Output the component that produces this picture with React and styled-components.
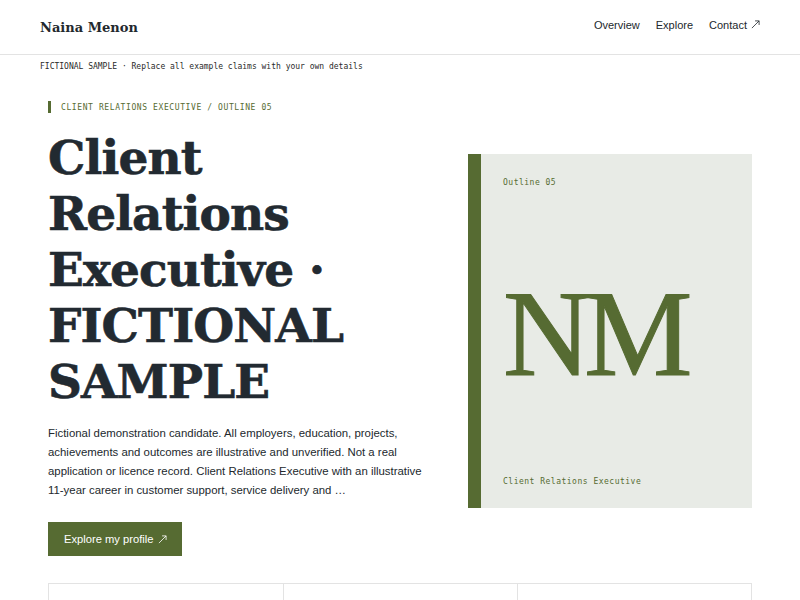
import React from 'react'
import styled, { createGlobalStyle } from 'styled-components'

const GlobalStyle = createGlobalStyle`
  * { box-sizing: border-box; }
  body {
    margin: 0;
    background: #ffffff;
    color: #222a31;
    font-family: "Liberation Sans", Arial, sans-serif;
  }
`

const green = '#566b32'
const mono = '"DejaVu Sans Mono", "Liberation Mono", monospace'
const serif = '"DejaVu Serif", Georgia, serif'

const Header = styled.header`
  height: 55px;
  padding: 0 40px;
  display: flex;
  align-items: center;
  justify-content: space-between;
  border-bottom: 1px solid #e3e3e3;
`

const Brand = styled.div`
  font-family: ${serif};
  font-weight: bold;
  font-size: 13px;
  color: #22282d;
`

const Nav = styled.nav`
  display: flex;
  gap: 16px;
  padding-bottom: 4px;

  a {
    color: #22282d;
    text-decoration: none;
    font-size: 11px;
  }
`

const Notice = styled.div`
  padding: 7px 40px 0;
  font-family: ${mono};
  font-size: 8px;
  color: #2a2a2a;
`

const Main = styled.main`
  width: 704px;
  margin: 0 auto;
`

const Hero = styled.section`
  display: grid;
  grid-template-columns: 1fr 284px;
  gap: 28px;
  align-items: center;
  padding-top: 30px;
`

const Left = styled.div``

const Eyebrow = styled.div`
  display: flex;
  align-items: center;
  gap: 10px;
  font-family: ${mono};
  font-size: 8px;
  letter-spacing: 0.6px;
  color: ${green};

  &::before {
    content: '';
    width: 3px;
    height: 12px;
    background: ${green};
  }
`

const Title = styled.h1`
  margin: 17px 0 0;
  font-family: ${serif};
  font-weight: 900;
  font-size: 47px;
  line-height: 56px;
  letter-spacing: -0.9px;
  color: #222a31;
  -webkit-text-stroke: 0.6px #222a31;
`

const Lead = styled.p`
  margin: 14px 0 0;
  font-size: 11.4px;
  line-height: 19px;
  color: #22282d;
`

const Button = styled.a`
  display: inline-flex;
  align-items: center;
  margin-top: 22px;
  height: 34px;
  padding: 0 15px 0 16px;
  background: ${green};
  color: #fff;
  font-size: 11.2px;
  text-decoration: none;
`

const Card = styled.div`
  height: 354px;
  margin-top: 4px;
  background: #e8ebe6;
  border-left: 13px solid ${green};
  padding: 24px 22px 22px 22px;
  display: flex;
  flex-direction: column;
  justify-content: space-between;
`

const CardLabel = styled.div`
  font-family: ${mono};
  font-size: 8px;
  letter-spacing: 0.5px;
  color: ${green};
`

const Monogram = styled.div`
  font-family: "Liberation Serif", "Times New Roman", serif;
  font-size: 122px;
  line-height: 1;
  color: ${green};
  letter-spacing: -7px;
  -webkit-text-stroke: 1px ${green};
  margin-top: 4px;
`

const Stats = styled.div`
  margin-top: 27px;
  display: grid;
  grid-template-columns: repeat(3, 1fr);
  border: 1px solid #e3e3e3;
  border-bottom: none;
  height: 40px;
`

const Stat = styled.div`
  & + & { border-left: 1px solid #e3e3e3; }
`

const ArrowIcon = styled.svg`
  width: 9px;
  height: 9px;
  margin-left: ${p => p.$gap}px;
`

const Arrow = ({ gap = 4 }) => (
  <ArrowIcon $gap={gap} viewBox="0 0 10 10">
    <path d="M1 9 L9 1 M4.5 1 H9 V5.5" fill="none" stroke="currentColor" strokeWidth="0.9" />
  </ArrowIcon>
)

export default function App() {
  return (
    <>
      <GlobalStyle />
      <Header>
        <Brand>Naina Menon</Brand>
        <Nav>
          <a href="#overview">Overview</a>
          <a href="#explore">Explore</a>
          <a href="#contact">Contact <Arrow gap={1} /></a>
        </Nav>
      </Header>
      <Notice>FICTIONAL SAMPLE · Replace all example claims with your own details</Notice>
      <Main>
        <Hero>
          <Left>
            <Eyebrow>CLIENT RELATIONS EXECUTIVE / OUTLINE 05</Eyebrow>
            <Title>Client Relations Executive · FICTIONAL SAMPLE</Title>
            <Lead>
              Fictional demonstration candidate. All employers, education, projects,
              achievements and outcomes are illustrative and unverified. Not a real
              application or licence record. Client Relations Executive with an
              illustrative 11-year career in customer support, service delivery and …
            </Lead>
            <Button href="#profile">Explore my profile<Arrow gap={4} /></Button>
          </Left>
          <Card>
            <CardLabel>Outline 05</CardLabel>
            <Monogram>NM</Monogram>
            <CardLabel>Client Relations Executive</CardLabel>
          </Card>
        </Hero>
        <Stats>
          <Stat />
          <Stat />
          <Stat />
        </Stats>
      </Main>
    </>
  )
}
